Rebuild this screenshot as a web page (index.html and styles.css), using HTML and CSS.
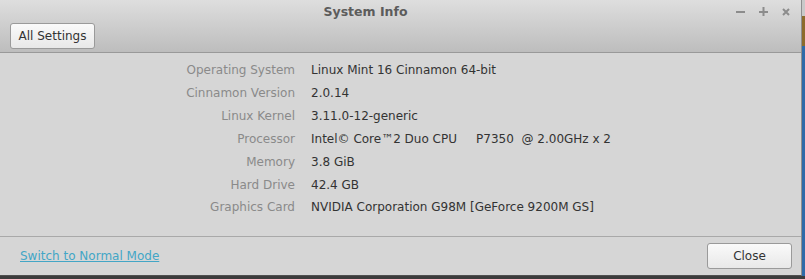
FILE: index.html
```html
<!DOCTYPE html>
<html lang="en">
<head>
  <meta charset="UTF-8">
  <title>System Info</title>
  <link rel="stylesheet" href="styles.css">
</head>
<body>

  <div class="window">

    <!-- Title bar + toolbar -->
    <div class="header">
      <div class="titlebar">
        <span class="title">System Info</span>
        <div class="controls">
          <svg width="9" height="9" viewBox="0 0 9 9"><rect x="0" y="4" width="9" height="2" fill="#8c8c8c"/></svg>
          <svg width="9" height="9" viewBox="0 0 9 9"><rect x="0" y="4" width="9" height="2" fill="#8c8c8c"/><rect x="3.5" y="0" width="2" height="9" fill="#8c8c8c"/></svg>
          <svg width="8" height="8" viewBox="0 0 8 8"><path d="M1 1 L7 7 M7 1 L1 7" stroke="#8c8c8c" stroke-width="2"/></svg>
        </div>
      </div>
      <div class="toolbar">
        <button class="btn">All Settings</button>
      </div>
    </div>

    <!-- Info rows -->
    <div class="info">
      <span class="label">Operating System</span><span class="value">Linux Mint 16 Cinnamon 64-bit</span>
      <span class="label">Cinnamon Version</span><span class="value">2.0.14</span>
      <span class="label">Linux Kernel</span><span class="value">3.11.0-12-generic</span>
      <span class="label">Processor</span><span class="value">Intel© Core™2 Duo CPU&nbsp;&nbsp;&nbsp;&nbsp;&nbsp;P7350&nbsp;&nbsp;@ 2.00GHz x 2</span>
      <span class="label">Memory</span><span class="value">3.8 GiB</span>
      <span class="label">Hard Drive</span><span class="value">42.4 GB</span>
      <span class="label">Graphics Card</span><span class="value">NVIDIA Corporation G98M [GeForce 9200M GS]</span>
    </div>

    <!-- Footer -->
    <div class="footer">
      <a class="mode-link" href="#">Switch to Normal Mode</a>
      <button class="btn">Close</button>
    </div>

  </div>

</body>
</html>
```

FILE: styles.css
```css
body { margin: 0; width: 805px; height: 279px; overflow: hidden; font-family: "DejaVu Sans", sans-serif; font-size: 12px;
  background: linear-gradient(to bottom, #c9c9c9 0 16px, #8d6b2c 16px 46px, #2f6aa8 46px 276px, #3c3c3c 276px); }
.window { width: 801px; height: 275px; background: #d6d6d6; border-right: 1px solid #8f8f8f; border-bottom: 1px solid #505050; display: flex; flex-direction: column; }
.header { height: 52px; background: linear-gradient(to bottom, #dedede, #bdbdbd); border-bottom: 1px solid #999; display: flex; flex-direction: column; }
.titlebar { height: 22px; position: relative; display: flex; justify-content: center; align-items: center; padding-right: 70px; }
.title { font-weight: bold; font-size: 12.5px; color: #5c5c5c; }
.controls { position: absolute; right: 11px; top: 7px; display: flex; gap: 14px; align-items: center; }
.toolbar { padding: 1px 10px 0; }
.btn { width: 85px; height: 26px; font-family: "DejaVu Sans", sans-serif; font-size: 12px; color: #333; padding: 0;
  border: 1px solid #9a9a9a; border-radius: 3px; background: linear-gradient(to bottom, #fafafa, #e8e8e8); }
.info { flex: 1; display: grid; grid-template-columns: 295px auto; column-gap: 16px; grid-auto-rows: 22.85px; align-items: center; padding-top: 6px; border-bottom: 1px solid #a9a9a9; }
.label { text-align: right; color: #8a8a8a; }
.value { color: #333; white-space: nowrap; }
.footer { height: 38px; display: flex; justify-content: space-between; align-items: center; padding: 0 9px 0 20px; }
.mode-link { color: #43a6c6; }
```
